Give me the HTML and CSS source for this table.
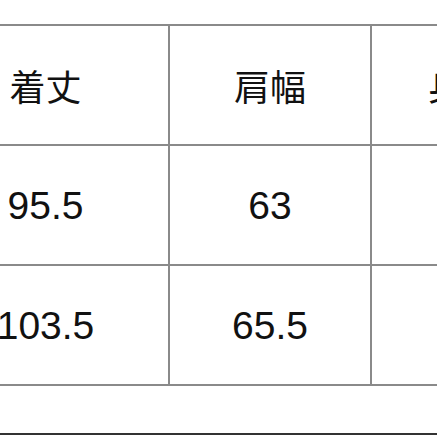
FILE: index.html
```html
<!DOCTYPE html>
<html lang="ja">
<head>
<meta charset="utf-8">
<link rel="stylesheet" href="styles.css">
</head>
<body>
<div class="page">
  <table class="size-table">
    <colgroup>
      <col class="c1"><col class="c2"><col class="c3">
    </colgroup>
    <tr class="head"><td>着丈</td><td>肩幅</td><td class="cut">身幅</td></tr>
    <tr><td>95.5</td><td>63</td><td></td></tr>
    <tr><td>103.5</td><td>65.5</td><td></td></tr>
  </table>
  <div class="bottom-rule"></div>
</div>
</body>
</html>
```
FILE: styles.css
```css
html, body {
  margin: 0;
  padding: 0;
  background: #ffffff;
  overflow: hidden;
  width: 437px;
  height: 437px;
}
.page {
  padding-top: 24px;
  width: 437px;
  height: 437px;
  box-sizing: border-box;
  display: flex;
  flex-direction: column;
  overflow: hidden;
}
.size-table {
  border-collapse: collapse;
  table-layout: fixed;
  margin-left: -79px;
  width: 637px;
  flex: none;
  font-family: "Liberation Sans", "Noto Sans CJK JP", sans-serif;
  font-size: 39px;
  color: #111111;
}
.c1 { width: 247px; }
.c2 { width: 202px; }
.c3 { width: 188px; }
.size-table td {
  border: 2px solid #8a8a8a;
  height: 118px;
  padding: 0;
  text-align: center;
  vertical-align: middle;
  line-height: 1;
}
.head td {
  font-family: "Noto Sans CJK JP", sans-serif;
  font-size: 36px;
}
.size-table td.cut {
  text-align: left;
  padding-left: 56px;
  white-space: nowrap;
  overflow: hidden;
  color: #111111;
}
.bottom-rule {
  margin-top: 47px;
  height: 2px;
  flex: none;
  background: #333333;
  width: 437px;
}
```
